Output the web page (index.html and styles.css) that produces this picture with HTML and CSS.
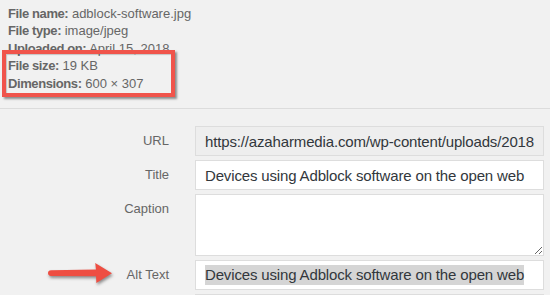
FILE: index.html
```html
<!DOCTYPE html>
<html>
<head>
<meta charset="utf-8">
<link rel="stylesheet" href="styles.css">
</head>
<body>
<div class="page">
  <div class="details">
    <div class="line"><strong>File name:</strong> adblock-software.jpg</div>
    <div class="line"><strong>File type:</strong> image/jpeg</div>
    <div class="line"><strong>Uploaded on:</strong> April 15, 2018</div>
    <div class="line"><strong>File size:</strong> 19 KB</div>
    <div class="line"><strong>Dimensions:</strong> 600 × 307</div>
    <div class="highlight-box"></div>
  </div>
  <div class="settings">
    <label class="setting">
      <span class="name">URL</span>
      <input class="field readonly" type="text" readonly value="https://azaharmedia.com/wp-content/uploads/2018/04/adblock-software.jpg">
    </label>
    <label class="setting">
      <span class="name">Title</span>
      <input class="field" type="text" value="Devices using Adblock software on the open web">
    </label>
    <label class="setting">
      <span class="name">Caption</span>
      <textarea class="field area"></textarea>
    </label>
    <div class="setting alt">
      <span class="name">Alt Text</span>
      <div class="field fake"><span class="sel">Devices using Adblock software on the open web</span></div>
      <svg class="arrow" width="90" height="34" viewBox="0 0 90 34">
        <path d="M11 12.2 L56 11.6 L55.2 5 L72 15.2 L56.4 25 L56 18.2 L11 18 Q8 17.8 8 15.1 Q8 12.4 11 12.2 Z" fill="#ee4e42"/>
      </svg>
    </div>
    <div class="setting">
      <span class="name"></span>
      <div class="field next"></div>
    </div>
  </div>
</div>
</body>
</html>
```
FILE: styles.css
```css
html, body {
  margin: 0;
  padding: 0;
  background: #f1f1f1;
  overflow: hidden;
}
.page {
  width: 550px;
  height: 295px;
  overflow: hidden;
  font-family: "Liberation Sans", Arial, sans-serif;
  color: #666;
}
.details {
  position: relative;
  padding: 5px 0 16px 8px;
  border-bottom: 1px solid #dcdcdc;
}
.line {
  font-size: 13px;
  line-height: 17.4px;
  white-space: nowrap;
}
.line strong {
  font-weight: bold;
  letter-spacing: -0.4px;
}
.highlight-box {
  position: absolute;
  left: 2px;
  top: 50px;
  width: 165px;
  height: 39px;
  border: 4px solid #f0544b;
  box-shadow: 2px 2px 2px rgba(60, 60, 60, 0.55), inset 1px 1px 1px rgba(60, 60, 60, 0.25);
}
.settings {
  display: flex;
  flex-direction: column;
  gap: 4px;
  padding: 17px 6px 0 0;
}
.setting {
  display: grid;
  grid-template-columns: 169px 1fr;
  column-gap: 26px;
  position: relative;
}
.name {
  font-size: 13px;
  text-align: right;
  color: #666;
  padding-top: 6px;
  line-height: 17px;
}
.field {
  box-sizing: border-box;
  height: 30px;
  margin: 0;
  border: 1px solid #dddddd;
  background: #fff;
  font-family: "Liberation Sans", Arial, sans-serif;
  font-size: 15px;
  letter-spacing: -0.15px;
  color: #32373c;
  padding: 0 9px;
  width: 100%;
  outline: none;
  border-radius: 0;
}
.readonly {
  background: #eeeeee;
}
.area {
  height: 62px;
  resize: vertical;
  display: block;
}
.fake {
  display: flex;
  align-items: center;
  white-space: nowrap;
  overflow: hidden;
}
.sel {
  background: #d5d5d5;
  line-height: 20px;
}
.arrow {
  position: absolute;
  left: 40px;
  top: -2px;
  filter: drop-shadow(1px 2px 1.5px rgba(40, 40, 40, 0.5));
}
```
